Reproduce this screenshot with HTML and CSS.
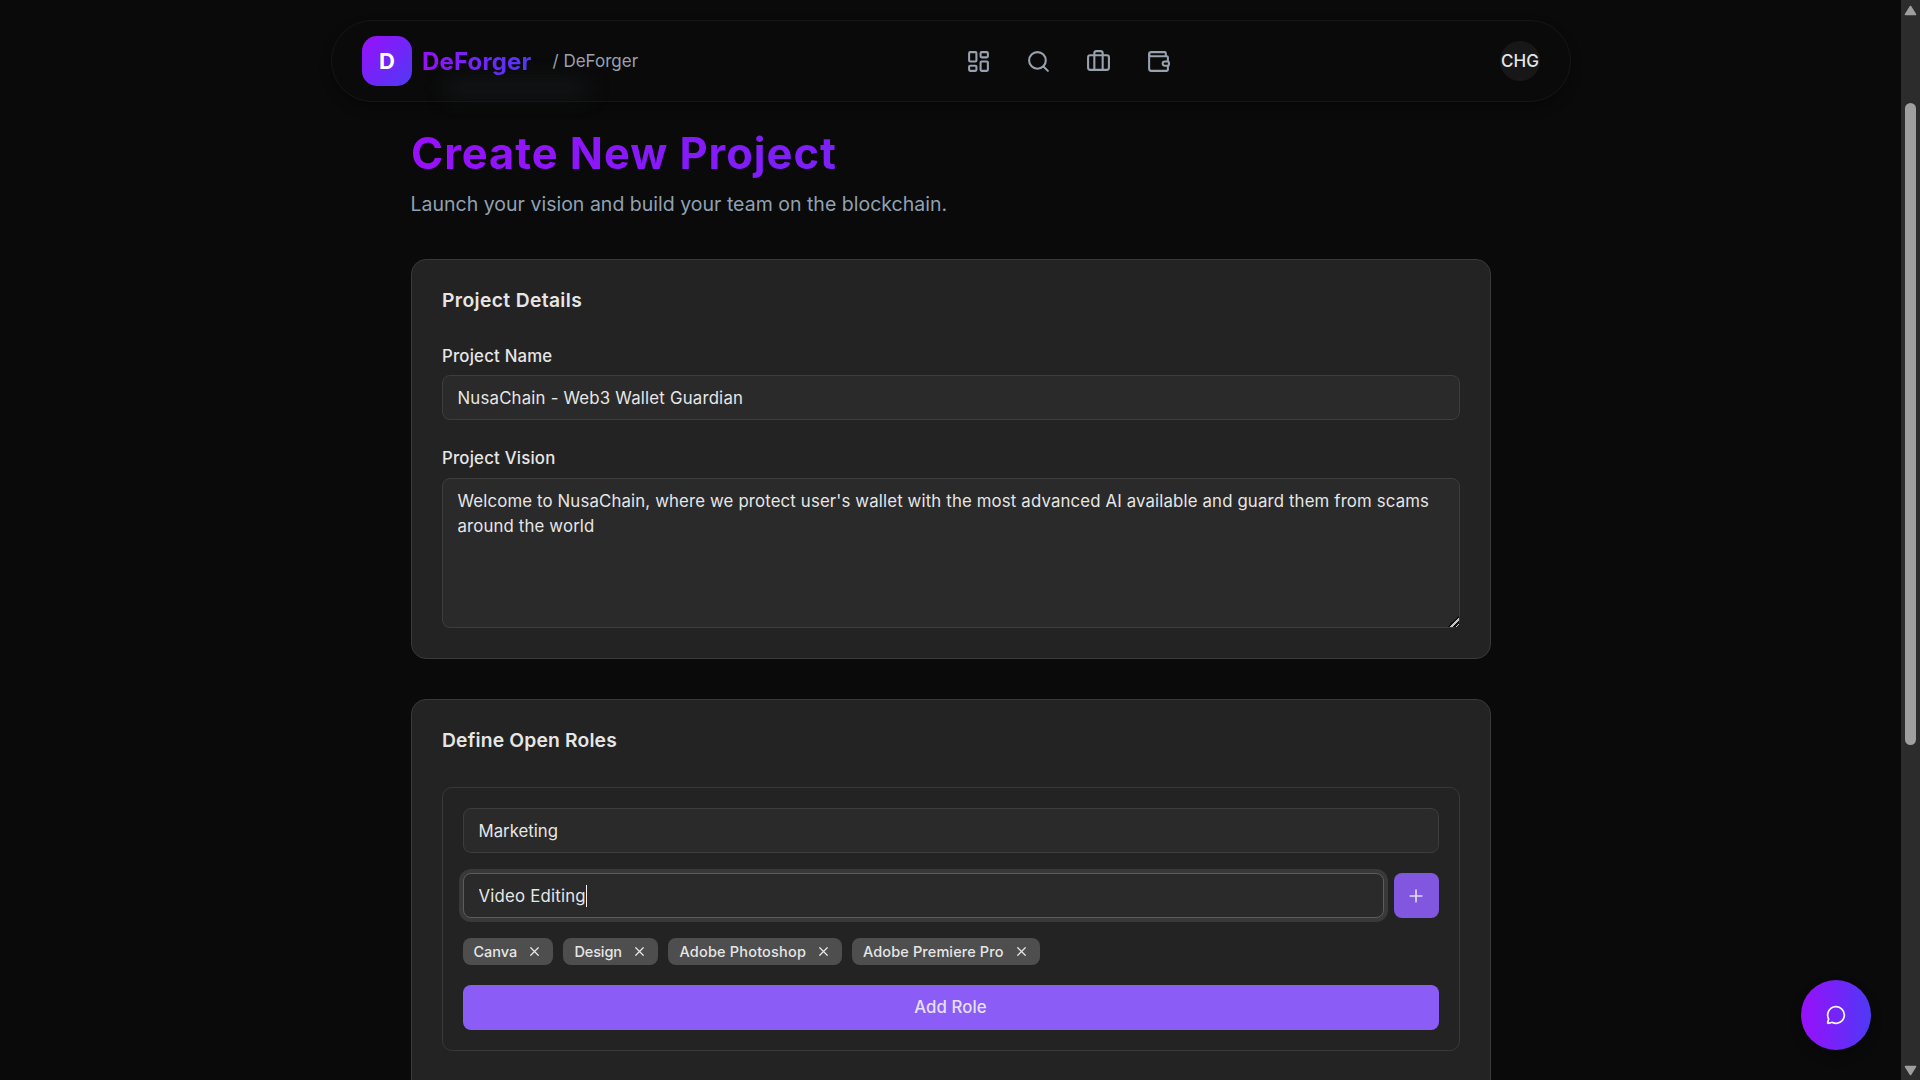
FILE: index.html
```html
<!DOCTYPE html>
<html lang="en">
<head>
<meta charset="utf-8">
<title>DeForger</title>
<link rel="stylesheet" href="styles.css">
</head>
<body>
<div class="viewport">
  <div class="page">
    <nav class="navbar">
      <div class="nav-ghost"></div>
      <div class="brand">
        <div class="logo">D</div>
        <span class="brand-name">DeForger</span>
        <span class="crumb">/ DeForger</span>
      </div>
      <div class="nav-icons">
        <svg class="icon" viewBox="0 0 24 24"><rect width="7" height="9" x="3" y="3" rx="1"/><rect width="7" height="5" x="14" y="3" rx="1"/><rect width="7" height="9" x="14" y="12" rx="1"/><rect width="7" height="5" x="3" y="16" rx="1"/></svg>
        <svg class="icon" viewBox="0 0 24 24"><circle cx="11" cy="11" r="8"/><path d="m21 21-4.3-4.3"/></svg>
        <svg class="icon" viewBox="0 0 24 24"><path d="M16 20V4a2 2 0 0 0-2-2h-4a2 2 0 0 0-2 2v16"/><rect width="20" height="14" x="2" y="6" rx="2"/></svg>
        <svg class="icon" viewBox="0 0 24 24"><path d="M19 7V4a1 1 0 0 0-1-1H5a2 2 0 0 0 0 4h15a1 1 0 0 1 1 1v4h-3a2 2 0 0 0 0 4h3a1 1 0 0 0 1-1v-2a1 1 0 0 0-1-1"/><path d="M3 5v14a2 2 0 0 0 2 2h15a1 1 0 0 0 1-1v-4"/></svg>
      </div>
      <div class="account"><div class="avatar">CHG</div></div>
    </nav>

    <main class="content">
      <h1 class="title">Create New Project</h1>
      <p class="subtitle">Launch your vision and build your team on the blockchain.</p>

      <section class="card">
        <h2 class="card-title details-title">Project Details</h2>
        <div class="field">
          <label class="label" for="name">Project Name</label>
          <input class="input" id="name" value="NusaChain - Web3 Wallet Guardian">
        </div>
        <div class="field">
          <label class="label" for="vision">Project Vision</label>
          <textarea class="input textarea" id="vision">Welcome to NusaChain, where we protect user's wallet with the most advanced AI available and guard them from scams around the world</textarea>
        </div>
      </section>

      <section class="card roles-card">
        <h2 class="card-title">Define Open Roles</h2>
        <div class="role">
          <input class="input role-name" value="Marketing">
          <div class="skill-row">
            <div class="skill-field">
              <input class="input focused" value="Video Editing">
              <span class="caret"></span>
            </div>
            <button class="add-skill" aria-label="Add skill"><svg viewBox="0 0 24 24"><path d="M5 12h14M12 5v14"/></svg></button>
          </div>
          <div class="tags">
            <span class="tag canva">Canva<svg viewBox="0 0 24 24"><path d="M18 6 6 18M6 6l12 12"/></svg></span>
            <span class="tag design">Design<svg viewBox="0 0 24 24"><path d="M18 6 6 18M6 6l12 12"/></svg></span>
            <span class="tag photoshop">Adobe Photoshop<svg viewBox="0 0 24 24"><path d="M18 6 6 18M6 6l12 12"/></svg></span>
            <span class="tag premiere">Adobe Premiere Pro<svg viewBox="0 0 24 24"><path d="M18 6 6 18M6 6l12 12"/></svg></span>
          </div>
          <button class="add-role">Add Role</button>
        </div>
      </section>
    </main>
    <button class="chat" aria-label="Chat"><svg viewBox="0 0 24 24"><path d="M2.992 16.342a2 2 0 0 1 .094 1.167l-1.065 3.29a1 1 0 0 0 1.236 1.168l3.413-.998a2 2 0 0 1 1.099.092 10 10 0 1 0-4.777-4.719"/></svg></button>
  </div>

  <div class="scrollbar">
    <svg class="arrow" viewBox="0 0 13 11"><path d="M6.5 1.5 11.5 9.5H1.5Z"/></svg>
    <div class="thumb"></div>
    <svg class="arrow down" viewBox="0 0 13 11"><path d="M6.5 9.5 11.5 1.5H1.5Z"/></svg>
  </div>
</div>
</body>
</html>
```
FILE: styles.css
```css
* { box-sizing: border-box; }
body {
  margin: 0;
  background: #0a0a0a;
  color: #e6e6e6;
  font-family: Inter, "Open Sans", sans-serif;
  overflow: hidden;
}
h1, h2, p { margin: 0; }
button { border: 0; padding: 0; font-family: inherit; }
svg {
  display: block;
  fill: none;
  stroke: currentColor;
  stroke-width: 2;
  stroke-linecap: round;
  stroke-linejoin: round;
}

.viewport {
  display: grid;
  grid-template-columns: 1fr 19px;
  height: 1080px;
  overflow: hidden;
}
.page {
  position: relative;
  height: 1080px;
  padding: 20px 0 0 1px;
  overflow: hidden;
}

/* Navigation */
.navbar {
  position: relative;
  display: grid;
  grid-template-columns: 1fr auto 1fr;
  align-items: center;
  width: 1240px;
  height: 82px;
  margin: 0 auto;
  padding: 0 30px;
  border: 1px solid #161616;
  border-radius: 41px;
  box-shadow: 0 6px 12px rgba(0, 0, 0, .3);
}
.nav-ghost {
  position: absolute;
  left: 115px;
  top: 60px;
  width: 140px;
  height: 14px;
  background: #15181a;
  filter: blur(10px);
}
.brand { position: relative; display: flex; align-items: center; }
.logo {
  width: 50px;
  height: 50px;
  border-radius: 15px;
  background: linear-gradient(135deg, #9810fa, #4f39f6);
  color: #fff;
  font-size: 22px;
  font-weight: 700;
  line-height: 50px;
  text-align: center;
}
.brand-name {
  margin-left: 10px;
  padding-top: 2px;
  background: linear-gradient(90deg, #9810fa, #4f39f6);
  -webkit-background-clip: text;
  background-clip: text;
  color: transparent;
  font-size: 24px;
  font-weight: 700;
  line-height: 34px;
  letter-spacing: .17px;
}
.crumb {
  margin-left: 21px;
  color: #99a1af;
  font-size: 17px;
}
.nav-icons {
  display: flex;
  gap: 35px;
  color: #99a1af;
  transform: translateX(117px);
}
.icon { width: 25px; height: 25px; }
.account { display: flex; justify-content: flex-end; }
.avatar {
  display: flex;
  justify-content: center;
  align-items: center;
  width: 40px;
  height: 40px;
  border-radius: 50%;
  background: #171717;
  font-size: 17px;
  font-weight: 500;
}

/* Page heading */
.content { width: 1080px; margin: 26px auto 0; }
.title {
  background: linear-gradient(90deg, #9810fa, #4f39f6);
  -webkit-background-clip: text;
  background-clip: text;
  color: transparent;
  font-size: 43.5px;
  font-weight: 700;
  line-height: 50px;
  height: 56px;
  letter-spacing: .96px;
}
.subtitle {
  margin-top: 8px;
  margin-left: -.5px;
  color: #90a1b3;
  font-size: 19.5px;
  line-height: 25px;
  letter-spacing: .01px;
}

/* Cards */
.card {
  margin-top: 40px;
  padding: 30px;
  border: 1px solid #393939;
  border-radius: 15px;
  background: #232323;
}
.subtitle + .card { margin-top: 42px; }
.roles-card { min-height: 480px; }
.card-title {
  margin-bottom: 37px;
  font-size: 19.3px;
  font-weight: 600;
  line-height: 20px;
  letter-spacing: .17px;
}
.details-title { letter-spacing: .36px; }
.field + .field { margin-top: 29px; }
.field + .field .label { margin-bottom: 11px; }
.label {
  display: block;
  margin-bottom: 10px;
  font-size: 16.8px;
  font-weight: 500;
  line-height: 18px;
  letter-spacing: .2px;
}
.input {
  display: block;
  width: 100%;
  height: 45px;
  margin: 0;
  padding: 0 14.5px;
  border: 1px solid #3d3d3d;
  border-radius: 8px;
  outline: 0;
  background: #2a2a2a;
  color: #e6e6e6;
  font: 400 16.8px/25px Inter, "Open Sans", sans-serif;
  letter-spacing: .2px;
}
.textarea {
  height: 150px;
  padding: 10px 14.5px;
  letter-spacing: .145px;
  resize: vertical;
}
.textarea::-webkit-resizer {
  background: linear-gradient(135deg, transparent 60%, #111 60% 67%, #c4c4c4 67% 77%, #111 77% 87%, #c4c4c4 87% 92%, transparent 92%);
}

/* Role editor */
.role {
  display: flex;
  flex-direction: column;
  gap: 20px;
  padding: 20px;
  border: 1px solid #393939;
  border-radius: 10px;
  height: 264px;
}
.role-name { letter-spacing: 0; }
.skill-row { display: flex; gap: 10px; }
.skill-field { position: relative; flex: 1; }
.focused { border-color: #5c5c5c; box-shadow: 0 0 0 4px #393939; }
.caret {
  position: absolute;
  left: 123px;
  top: 12px;
  width: 1px;
  height: 22px;
  background: #f2f2f2;
}
.add-skill {
  display: flex;
  align-items: center;
  justify-content: center;
  width: 45px;
  height: 45px;
  padding-right: 1px;
  border-radius: 8px;
  background: #8257df;
  color: #e2daf5;
}
.add-skill svg { width: 20px; height: 20px; }
.tags { display: flex; gap: 10px; }
.tag {
  display: flex;
  align-items: center;
  justify-content: space-between;
  height: 27px;
  padding: 0 11px;
  border-radius: 8px;
  background: #4e4e4e;
  font-size: 14.5px;
  font-weight: 500;
}
.tag svg { width: 15px; height: 15px; }
.canva { width: 90px; padding-left: 10.5px; letter-spacing: -.03px; }
.design { width: 95px; padding-left: 11.5px; letter-spacing: -.14px; }
.photoshop { width: 174px; padding-left: 11.5px; letter-spacing: .18px; }
.premiere { width: 188px; letter-spacing: .11px; }
.add-role {
  height: 45px;
  padding: 0 1px 2px 0;
  border-radius: 8px;
  background: #8b5cf6;
  color: #e6e0f5;
  font-size: 16.8px;
  font-weight: 500;
  letter-spacing: .08px;
}

/* Floating chat button */
.chat {
  position: absolute;
  right: 30px;
  bottom: 30px;
  display: flex;
  align-items: center;
  justify-content: center;
  width: 70px;
  height: 70px;
  border-radius: 50%;
  background: linear-gradient(90deg, #9810fa, #4f39f6);
  box-shadow: 0 6px 12px rgba(0, 0, 0, .3);
  color: #fff;
}
.chat svg { width: 20px; height: 20px; }

/* Scrollbar */
.scrollbar {
  display: flex;
  flex-direction: column;
  align-items: center;
  height: 1080px;
  padding: 5px 0 4px;
  background: #2c2c2c;
}
.arrow { width: 13px; height: 11px; fill: #9f9f9f; stroke: #9f9f9f; stroke-width: 1.6; }
.thumb {
  width: 11px;
  height: 642px;
  margin-top: 87px;
  border-radius: 6px;
  background: #9f9f9f;
}
.down { margin-top: auto; }
```
